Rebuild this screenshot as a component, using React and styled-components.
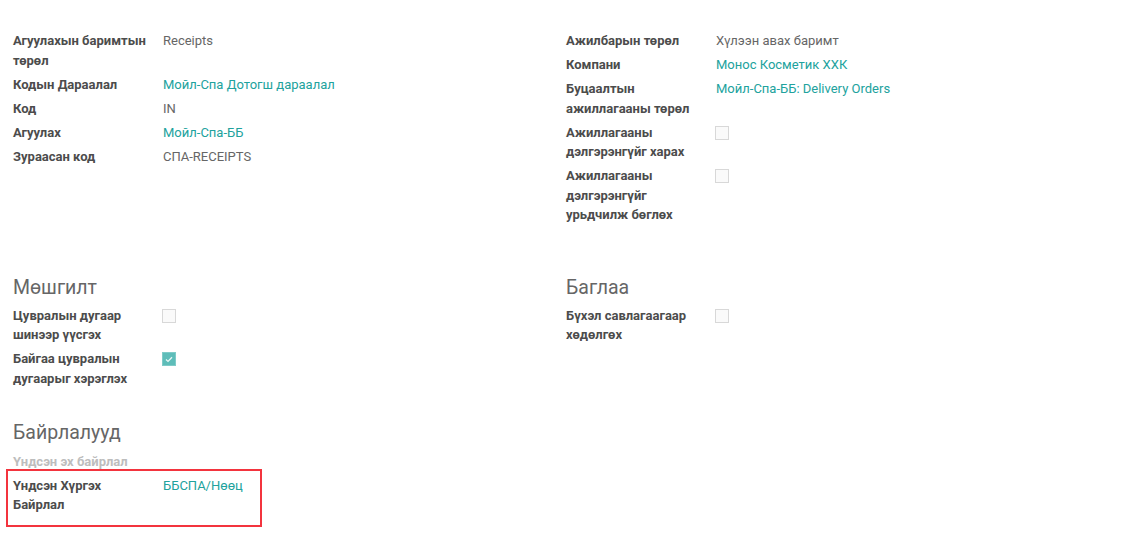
import React from "react";
import styled, { createGlobalStyle } from "styled-components";

const Global = createGlobalStyle`
  html, body { margin: 0; padding: 0; background: #fff; }
  body { font-family: Roboto, "Noto Sans", sans-serif; font-size: 13px; }
`;

const Page = styled.div`
  width: 1134px;
  height: 554px;
  box-sizing: border-box;
  padding: 31px 15px 0 13px;
  overflow: hidden;
  background: #fff;
`;

const Columns = styled.div`
  display: grid;
  grid-template-columns: 553px 553px;
  margin-bottom: ${(p) => p.$mb || 0}px;
`;

const Group = styled.div`
  display: flex;
  flex-direction: column;
`;

const Heading = styled.div`
  font-size: 19.5px;
  line-height: 23.4px;
  color: #666;
  font-weight: 400;
  margin-bottom: 7px;
`;

const Row = styled.div`
  display: grid;
  grid-template-columns: 150px 1fr;
  line-height: 19.5px;
  padding-bottom: 4.5px;
`;

const Label = styled.div`
  font-weight: 700;
  color: ${(p) => (p.$muted ? "#bdbdbd" : "#4c4c4c")};
  padding-right: 14px;
`;

const Value = styled.div`
  color: #666;
`;

const Link = styled.a`
  color: #21a29d;
  text-decoration: none;
`;

const Box = styled.span`
  width: 14px;
  height: 14px;
  margin-top: 3px;
  margin-left: -1px;
  box-sizing: border-box;
  border: 1px solid ${(p) => (p.$checked ? "#7fcbc8" : "#d8d8d8")};
  background: ${(p) => (p.$checked ? "#5ebdb9" : "#fafafa")};
  display: flex;
  align-items: center;
  justify-content: center;
`;

const Highlight = styled.div`
  width: 256px;
  box-sizing: border-box;
  margin: -7px 0 0 -7px;
  padding: 5px 0 6px 5px;
  border: 2px solid #f3343e;
`;

const Checkbox = ({ checked }) => (
  <Box $checked={checked}>
    {checked && (
      <svg width="8" height="7" viewBox="0 0 8 7">
        <path d="M1 3.6 L3 5.4 L7 1.2" fill="none" stroke="#e9f7f6" strokeWidth="1.3" />
      </svg>
    )}
  </Box>
);

export default function App() {
  return (
    <>
      <Global />
      <Page>
        <Columns $mb={46.5}>
          <Group>
            <Row>
              <Label>Агуулахын баримтын төрөл</Label>
              <Value>Receipts</Value>
            </Row>
            <Row>
              <Label>Кодын Дараалал</Label>
              <Value><Link>Мойл-Спа Дотогш дараалал</Link></Value>
            </Row>
            <Row>
              <Label>Код</Label>
              <Value>IN</Value>
            </Row>
            <Row>
              <Label>Агуулах</Label>
              <Value><Link>Мойл-Спа-ББ</Link></Value>
            </Row>
            <Row>
              <Label>Зураасан код</Label>
              <Value>СПА-RECEIPTS</Value>
            </Row>
          </Group>
          <Group>
            <Row>
              <Label>Ажилбарын төрөл</Label>
              <Value>Хүлээн авах баримт</Value>
            </Row>
            <Row>
              <Label>Компани</Label>
              <Value><Link>Монос Косметик ХХК</Link></Value>
            </Row>
            <Row>
              <Label>Буцаалтын ажиллагааны төрөл</Label>
              <Value><Link>Мойл-Спа-ББ: Delivery Orders</Link></Value>
            </Row>
            <Row>
              <Label>Ажиллагааны дэлгэрэнгүйг харах</Label>
              <Value><Checkbox /></Value>
            </Row>
            <Row>
              <Label>Ажиллагааны дэлгэрэнгүйг урьдчилж бөглөх</Label>
              <Value><Checkbox /></Value>
            </Row>
          </Group>
        </Columns>

        <Columns $mb={28.5}>
          <Group>
            <Heading>Мөшгилт</Heading>
            <Row>
              <Label>Цувралын дугаар шинээр үүсгэх</Label>
              <Value><Checkbox /></Value>
            </Row>
            <Row>
              <Label>Байгаа цувралын дугаарыг хэрэглэх</Label>
              <Value><Checkbox checked /></Value>
            </Row>
          </Group>
          <Group>
            <Heading>Баглаа</Heading>
            <Row>
              <Label>Бүхэл савлагаагаар хөдөлгөх</Label>
              <Value><Checkbox /></Value>
            </Row>
          </Group>
        </Columns>

        <Columns>
          <Group>
            <Heading>Байрлалууд</Heading>
            <Row>
              <Label $muted>Үндсэн эх байрлал</Label>
              <Value />
            </Row>
            <Highlight>
              <Row>
                <Label>Үндсэн Хүргэх Байрлал</Label>
                <Value><Link>ББСПА/Нөөц</Link></Value>
              </Row>
            </Highlight>
          </Group>
        </Columns>
      </Page>
    </>
  );
}
